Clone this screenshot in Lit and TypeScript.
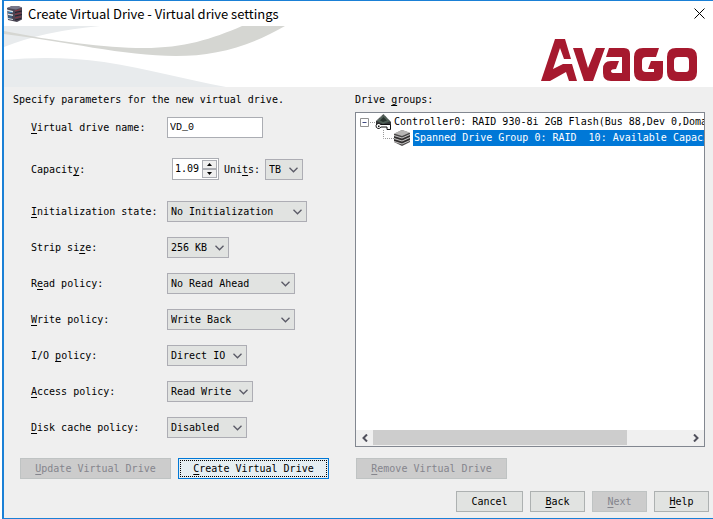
import { LitElement, html, css, nothing, type TemplateResult } from "lit";
import { customElement } from "lit/decorators.js";

/** Renders a caption, underlining the mnemonic letter that follows "&". */
const caption = (text: string): TemplateResult => {
  const at = text.indexOf("&");
  return at < 0
    ? html`${text}`
    : html`${text.slice(0, at)}<u>${text[at + 1]}</u>${text.slice(at + 2)}`;
};

const shared = css`
  * {
    box-sizing: border-box;
  }
  u {
    text-decoration: underline;
    text-underline-offset: 2px;
  }
  svg {
    display: block;
  }
`;

@customElement("push-button")
class PushButton extends LitElement {
  static properties = { label: {}, disabled: { type: Boolean }, active: { type: Boolean } };
  static styles = [
    shared,
    css`
      :host {
        display: block;
        flex: none;
      }
      button {
        display: block;
        width: 100%;
        height: 21px;
        margin: 0;
        padding: 0;
        border: 1px solid #adb1b1;
        background: #e1e3e1;
        color: #000;
        font: inherit;
      }
      button:disabled {
        border-color: #bfc3c3;
        background: #cccccc;
        color: #85858c;
      }
      .active {
        border: 1px solid #0078d7;
        background: #e5eef2;
        outline: 1px dotted #000;
        outline-offset: -3px;
      }
    `,
  ];
  declare label: string;
  declare disabled: boolean;
  declare active: boolean;
  render() {
    return html`<button class=${this.active ? "active" : nothing} ?disabled=${this.disabled}>
      ${caption(this.label)}
    </button>`;
  }
}

const policies = [
  { id: "init", label: "&Initialization state:", value: "No Initialization", size: "w140" },
  { id: "strip", label: "Strip si&ze:", value: "256 KB", size: "w62" },
  { id: "read", label: "R&ead policy:", value: "No Read Ahead", size: "w128" },
  { id: "write", label: "&Write policy:", value: "Write Back", size: "w128" },
  { id: "io", label: "I/O &policy:", value: "Direct IO", size: "w80" },
  { id: "access", label: "&Access policy:", value: "Read Write", size: "w86" },
  { id: "cache", label: "&Disk cache policy:", value: "Disabled", size: "w80" },
];

const dropDown = (id: string, value: string, size: string) => html`
  <span class="drop ${size}">
    <select id=${id}>
      <option>${value}</option>
    </select>
    <svg class="chevron" width="9" height="6" viewBox="0 0 9 6" aria-hidden="true">
      <path d="M0.5 0.8 4.5 4.8 8.5 0.8" fill="none" stroke="#5a5a66" stroke-width="1.3" />
    </svg>
  </span>
`;

const serverIcon = html`<svg width="16" height="16" viewBox="0 0 16 16" aria-hidden="true">
  <path d="M0 2 5 0h6l4 1.500v12L10 16 1 14z" fill="#4a4654" />
  <path d="M0 2 5 0h6l4 1.500L9 3.500z" fill="#77778a" />
  <path d="M0 3.500 6 5v1.500L0 5zM1 7.500l5 1V10L1 9zM1 12l5 1v1l-5-1z" fill="#d5e2ec" />
  <path d="M1 6h4v1H1zM1 10.500h4v1H1z" fill="#3679a8" />
  <path d="M8 5l6-1.500M8 8.500 14 7M8 12l6-1.500" stroke="#8c3540" fill="none" />
  <path d="M8 6.500 15 5M8 10l7-1.500M8 14l6-1.500" stroke="#24202c" fill="none" />
</svg>`;

const controllerIcon = html`<svg width="17" height="16" viewBox="0 0 17 16" aria-hidden="true">
  <path d="M8.500 0 16 8v3l-5 2-10-2V7z" fill="#35383a" />
  <path d="M8.500 1 15 7.500 8 10 2 7z" fill="#506157" />
  <path d="M8.500 3 12 6.500 8 8 5 6.500z" fill="#28332e" />
  <path d="M2 6.500 8.500.5 15 7" stroke="#9da3a0" stroke-dasharray="1 1" fill="none" />
  <path
    d="M3.500 9.500a2.500 2.500 0 1 0 2.300 3.500H12v2.500h3.500V10.500H5.500a2.500 2.500 0 0 0-2-1z"
    fill="#fff"
    stroke="#111"
  />
  <path d="M3 11.500h1.500V13H3z" fill="#111" />
</svg>`;

const groupIcon = html`<svg width="17" height="16" viewBox="0 0 17 16" aria-hidden="true">
  <path d="M0 4 8 0l8 3v9l-8 4-8-4z" fill="#4a4848" />
  <path d="M0 3.500 8 0l8 2.500L8 6z" fill="#b7b5b4" />
  <path d="M0 5.500 8 8l8-3.500M0 8.500 8 11l8-3.500M0 11.500 8 14l8-3.500" stroke="#c4c2c2" fill="none" />
  <path d="M0 7 8 9.500 16 6M0 10l8 2.500L16 9" stroke="#2b2929" fill="none" />
</svg>`;

@customElement("app-root")
class AppRoot extends LitElement {
  static styles = [
    shared,
    css`
      :host {
        display: flex;
        flex-direction: column;
        min-height: 100vh;
        margin-left: 2px;
        overflow: hidden;
        box-sizing: border-box;
        border: 1px solid #1a80d6;
        border-left-width: 2px;
        border-right: 0;
        background: #efefef;
        color: #000;
        font: 10px/14px "DejaVu Sans Mono", "Liberation Mono", monospace;
      }
      .title {
        display: flex;
        align-items: center;
        height: 25px;
        padding: 0 8px 0 3px;
        background: #fff;
      }
      h1 {
        flex: 1;
        margin: 0 0 0 5px;
        font: 13px/20px "Noto Sans CJK SC", Roboto, sans-serif;
      }
      .close {
        padding: 0;
        border: 0;
        background: none;
      }
      .banner {
        display: flex;
        justify-content: space-between;
        height: 61px;
        background: #fff;
      }
      .logo {
        margin: 13px 16px 0 0;
      }
      .panes {
        display: grid;
        grid-template-columns: 342px minmax(0, 1fr);
        padding: 6px 8px 0 9px;
      }
      .heading {
        margin: 0;
        padding-bottom: 5px;
        font: inherit;
      }
      .form {
        padding: 0 0 9px 18px;
      }
      .row {
        display: flex;
        align-items: flex-end;
        height: 36px;
      }
      .tall {
        height: 42px;
      }
      .first {
        height: 26px;
      }
      .row label {
        flex: none;
        line-height: 20px;
      }
      .label {
        width: 136px;
      }
      .units {
        width: 41px;
      }
      input {
        margin: 0;
        border: 1px solid #abadb3;
        border-radius: 0;
        background: #fff;
        color: #000;
        font: inherit;
        line-height: 18px;
      }
      .name {
        width: 96px;
        height: 21px;
        padding: 0 2px;
        font-family: "Liberation Mono", monospace;
      }
      .spinner {
        display: flex;
        width: 47px;
        height: 22px;
        margin: 0 5px;
        border: 1px solid #abadb3;
        background: #fff;
      }
      .amount {
        width: 29px;
        padding: 0 0 0 2px;
        border: 0;
      }
      .steps {
        display: flex;
        flex-direction: column;
        padding: 1px 0;
      }
      .step {
        display: grid;
        place-items: center;
        width: 15px;
        height: 9px;
        padding: 0;
        border: 1px solid #abadb3;
        background: #efefef;
      }
      .drop {
        display: grid;
        flex: none;
      }
      select,
      .chevron {
        grid-area: 1 / 1;
      }
      select {
        appearance: none;
        width: 100%;
        height: 21px;
        margin: 0;
        padding: 0 16px 0 3px;
        border: 1px solid #adadb4;
        border-radius: 0;
        background: #e1e3e1;
        color: #000;
        font: inherit;
      }
      .chevron {
        place-self: center end;
        margin-right: 5px;
        pointer-events: none;
      }
      .w38 { width: 38px; }
      .w55 { width: 55px; }
      .w62 { width: 62px; }
      .w67 { width: 67px; }
      .w80 { width: 80px; }
      .w86 { width: 86px; }
      .w128 { width: 128px; }
      .w140 { width: 140px; }
      .w151 { width: 151px; }
      .groups {
        display: flex;
        flex-direction: column;
      }
      .tree {
        display: flex;
        flex: 1;
        flex-direction: column;
        border: 1px solid #828790;
        background: #fff;
      }
      .items {
        flex: 1;
        margin: 0;
        padding: 1px 0 0 4px;
        overflow: hidden;
        list-style: none;
      }
      .item {
        display: flex;
        align-items: center;
        height: 16px;
      }
      .item svg {
        flex: none;
      }
      .text {
        flex: 1;
        padding-left: 2px;
        line-height: 16px;
        white-space: pre;
      }
      .selected {
        margin-left: 2px;
        padding-left: 1px;
        background: #0078d7;
        color: #fff;
      }
      .scroll {
        display: grid;
        grid-template-columns: 17px 1fr 17px;
        height: 16px;
        background: #f0f0f0;
      }
      .arrow {
        display: grid;
        place-items: center;
        padding: 0;
        border: 0;
        background: none;
      }
      .thumb {
        width: 81%;
        height: 15px;
        background: #cdcdcd;
      }
      .actions {
        display: grid;
        grid-template-columns: 151px 151px 171px;
        column-gap: 7px;
        padding: 11px 0 0 16px;
      }
      .remove {
        justify-self: end;
      }
      .footer {
        display: flex;
        justify-content: flex-end;
        gap: 7px;
        padding: 12px 4px 6px 0;
      }
    `,
  ];

  render() {
    return html`
      <header class="title">
        ${serverIcon}
        <h1>Create Virtual Drive - Virtual drive settings</h1>
        <button class="close" aria-label="Close">
          <svg width="11" height="11" viewBox="0 0 11 11">
            <path d="M.5.5 10.500 10.500M10.500.5.5 10.500" stroke="#000" fill="none" />
          </svg>
        </button>
      </header>
      <div class="banner">
        <svg width="285" height="61" viewBox="0 0 285 61" aria-hidden="true">
          <path d="M0 0H96Q40 5 0 21z" fill="#e8ebed" />
          <path d="M0 34Q50 29 100 36C145 43 180 53 222 61H0z" fill="#e8ebed" />
          <path d="M0 5C50 15 100 22 140 22C180 22 208 13 238 0H281C245 21 210 30 172 30C120 30 60 15 0 8z" fill="#d5d6d2" />
        </svg>
        <svg class="logo" width="156" height="42" viewBox="0 0 156 42" role="img" aria-label="Avago">
          <g fill="#a6192e" fill-rule="evenodd">
            <path d="M0 42 14 0h10l6 20h-7L19 9 12 30l10-5h9l5 17h-8l-3-9L9 42z" />
            <path d="M32 9h9l6 20 8-20h9L52 42h-9z" />
            <path d="M68 9h15q6 0 6 6v27H70q-8 0-8-8v-4q0-8 8-8h8l-3 8q-5 0-5 2 0 2 3 2h8V18H65z" />
            <path d="M102 9h16l-3 9h-10q-4 0-4 4v7q0 4 4 4h8v-3h-6l3-8h12v12q0 8-8 8h-12q-9 0-9-9V18q0-9 9-9z" />
            <path d="M135 9h12q9 0 9 9v15q0 9-9 9h-12q-9 0-9-9V18q0-9 9-9zm2 9q-4 0-4 4v7q0 4 4 4h8q3 0 3-4v-7q0-4-3-4z" />
          </g>
        </svg>
      </div>
      <main class="panes">
        <section>
          <h2 class="heading">Specify parameters for the new virtual drive.</h2>
          <div class="form">
            <div class="row first">
              <label class="label" for="name">${caption("&Virtual drive name:")}</label>
              <input class="name" id="name" value="VD_0" />
            </div>
            <div class="row tall">
              <label class="label" for="amount">${caption("Capacit&y:")}</label>
              <div class="spinner">
                <input class="amount" id="amount" inputmode="decimal" value="1.09" />
                <div class="steps">
                  <button class="step" aria-label="Increase">
                    <svg width="5" height="3" viewBox="0 0 5 3"><path d="M0 3 2.500 0 5 3z" /></svg>
                  </button>
                  <button class="step" aria-label="Decrease">
                    <svg width="5" height="3" viewBox="0 0 5 3"><path d="M0 0 2.500 3 5 0z" /></svg>
                  </button>
                </div>
              </div>
              <label class="units" for="units">${caption("Uni&ts:")}</label>
              ${dropDown("units", "TB", "w38")}
            </div>
            ${policies.map(
              (p, i) => html`<div class="row ${i ? "" : "tall"}">
                <label class="label" for=${p.id}>${caption(p.label)}</label>
                ${dropDown(p.id, p.value, p.size)}
              </div>`
            )}
          </div>
        </section>
        <section class="groups">
          <h2 class="heading">${caption("Drive &groups:")}</h2>
          <div class="tree">
            <ul class="items" aria-label="Drive groups">
              <li class="item">
                <svg width="15" height="16" viewBox="0 0 15 16" aria-hidden="true">
                  <path d="M.5 4.500h8v8h-8z" fill="#fff" stroke="#919191" />
                  <path d="M2.500 8.500h4" stroke="#404a80" />
                  <path d="M10 8.500h5" stroke="#999" stroke-dasharray="1 1" />
                </svg>
                ${controllerIcon}
                <span class="text">Controller0: RAID 930-8i 2GB Flash(Bus 88,Dev 0,Doma</span>
              </li>
              <li class="item">
                <svg width="34" height="16" viewBox="0 0 34 16" aria-hidden="true">
                  <path d="M23.500 0v8.500H34" fill="none" stroke="#999" stroke-dasharray="1 1" />
                </svg>
                ${groupIcon}
                <span class="text selected">Spanned Drive Group 0: RAID  10: Available Capaci</span>
              </li>
            </ul>
            <div class="scroll">
              <button class="arrow" aria-label="Scroll left">
                <svg width="6" height="8" viewBox="0 0 6 8">
                  <path d="M5 .5 1.500 4 5 7.500" fill="none" stroke="#50505c" stroke-width="2" />
                </svg>
              </button>
              <div class="thumb"></div>
              <button class="arrow" aria-label="Scroll right">
                <svg width="6" height="8" viewBox="0 0 6 8">
                  <path d="M1 .5 4.500 4 1 7.500" fill="none" stroke="#50505c" stroke-width="2" />
                </svg>
              </button>
            </div>
          </div>
        </section>
      </main>
      <div class="actions">
        <push-button label="&Update Virtual Drive" disabled></push-button>
        <push-button label="&Create Virtual Drive" active></push-button>
        <push-button class="remove w151" label="&Remove Virtual Drive" disabled></push-button>
      </div>
      <footer class="footer">
        <push-button class="w67" label="Cancel"></push-button>
        <push-button class="w55" label="&Back"></push-button>
        <push-button class="w55" label="&Next" disabled></push-button>
        <push-button class="w55" label="&Help"></push-button>
      </footer>
    `;
  }
}
